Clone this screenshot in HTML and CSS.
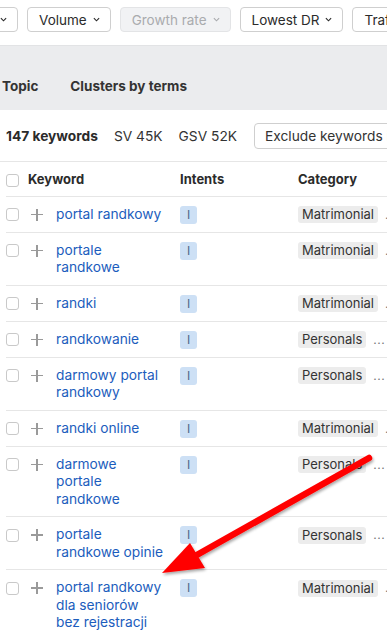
FILE: index.html
```html
<!DOCTYPE html>
<html lang="pl">
<head>
<meta charset="utf-8">
<title>Keywords</title>
<link rel="stylesheet" href="styles.css">
</head>
<body>
<div class="page">
  <div class="toolbar">
    <button class="btn btn-first">KD <svg class="chev" viewBox="0 0 8 5"><path d="M1 1l3 3 3-3"/></svg></button>
    <button class="btn">Volume <svg class="chev" viewBox="0 0 8 5"><path d="M1 1l3 3 3-3"/></svg></button>
    <button class="btn btn-disabled">Growth rate <svg class="chev" viewBox="0 0 8 5"><path d="M1 1l3 3 3-3"/></svg></button>
    <button class="btn">Lowest DR <svg class="chev" viewBox="0 0 8 5"><path d="M1 1l3 3 3-3"/></svg></button>
    <button class="btn">Traffic potential <svg class="chev" viewBox="0 0 8 5"><path d="M1 1l3 3 3-3"/></svg></button>
  </div>

  <div class="tabs">
    <div class="tab">Topic</div>
    <div class="tab">Clusters by terms</div>
  </div>

  <div class="stats">
    <span class="count">147 keywords</span>
    <span class="stat sv">SV 45K</span>
    <span class="stat gsv">GSV 52K</span>
    <div class="exclude">Exclude keywords in clusters</div>
  </div>

  <div class="table">
    <div class="row head">
      <span class="cb"></span>
      <span class="h-kw">Keyword</span>
      <span class="h-int">Intents</span>
      <span class="h-cat">Category</span>
    </div>

    <div class="row">
      <span class="cb"></span><span class="plus"></span>
      <a class="kw">portal randkowy</a>
      <span class="intent"><span class="ib">I</span></span>
      <span class="cat"><span class="cb-tag">Matrimonial</span><span class="more">...</span></span>
    </div>
    <div class="row">
      <span class="cb"></span><span class="plus"></span>
      <a class="kw">portale randkowe</a>
      <span class="intent"><span class="ib">I</span></span>
      <span class="cat"><span class="cb-tag">Matrimonial</span><span class="more">...</span></span>
    </div>
    <div class="row">
      <span class="cb"></span><span class="plus"></span>
      <a class="kw">randki</a>
      <span class="intent"><span class="ib">I</span></span>
      <span class="cat"><span class="cb-tag">Matrimonial</span><span class="more">...</span></span>
    </div>
    <div class="row">
      <span class="cb"></span><span class="plus"></span>
      <a class="kw">randkowanie</a>
      <span class="intent"><span class="ib">I</span></span>
      <span class="cat"><span class="cb-tag">Personals</span><span class="more">...</span></span>
    </div>
    <div class="row">
      <span class="cb"></span><span class="plus"></span>
      <a class="kw">darmowy portal randkowy</a>
      <span class="intent"><span class="ib">I</span></span>
      <span class="cat"><span class="cb-tag">Personals</span><span class="more">...</span></span>
    </div>
    <div class="row">
      <span class="cb"></span><span class="plus"></span>
      <a class="kw">randki online</a>
      <span class="intent"><span class="ib">I</span></span>
      <span class="cat"><span class="cb-tag">Matrimonial</span><span class="more">...</span></span>
    </div>
    <div class="row">
      <span class="cb"></span><span class="plus"></span>
      <a class="kw">darmowe portale randkowe</a>
      <span class="intent"><span class="ib">I</span></span>
      <span class="cat"><span class="cb-tag">Personals</span><span class="more">...</span></span>
    </div>
    <div class="row">
      <span class="cb"></span><span class="plus"></span>
      <a class="kw">portale randkowe opinie</a>
      <span class="intent"><span class="ib">I</span></span>
      <span class="cat"><span class="cb-tag">Personals</span><span class="more">...</span></span>
    </div>
    <div class="row">
      <span class="cb"></span><span class="plus"></span>
      <a class="kw">portal randkowy dla seniorów bez rejestracji</a>
      <span class="intent"><span class="ib">I</span></span>
      <span class="cat"><span class="cb-tag">Matrimonial</span><span class="more">...</span></span>
    </div>
  </div>

  <svg class="arrow" width="387" height="639" viewBox="0 0 387 639">
    <defs>
      <filter id="sh" x="-20%" y="-20%" width="140%" height="140%">
        <feGaussianBlur in="SourceAlpha" stdDeviation="1.5"/>
        <feOffset dx="1" dy="1.5"/>
        <feComponentTransfer><feFuncA type="linear" slope="0.35"/></feComponentTransfer>
        <feMerge><feMergeNode/><feMergeNode in="SourceGraphic"/></feMerge>
      </filter>
    </defs>
    <g filter="url(#sh)">
      <line x1="369" y1="458" x2="195" y2="556" stroke="#ff0000" stroke-width="6.5" stroke-linecap="round"/>
      <polygon points="162,573 190,543 205,568" fill="#ff0000"/>
    </g>
  </svg>
</div>
</body>
</html>
```

FILE: styles.css
```css
* { box-sizing: border-box; }

html, body {
  margin: 0;
  padding: 0;
  background: #ffffff;
}

body {
  font-family: Inter, "Noto Sans", "Liberation Sans", sans-serif;
  color: #2b2b2b;
  width: 387px;
  height: 639px;
  overflow: hidden;
}

.page {
  position: relative;
  width: 387px;
  height: 639px;
  overflow: hidden;
}

/* toolbar */
.toolbar {
  display: flex;
  gap: 9px;
  height: 45px;
  padding-top: 7px;
  margin-left: -42px;
  white-space: nowrap;
}

.btn {
  display: flex;
  align-items: center;
  gap: 6px;
  flex: none;
  height: 25px;
  padding: 0 10px 0 11px;
  border: 1px solid #cfcfcf;
  border-radius: 4px;
  background: #fff;
  font-family: inherit;
  font-size: 13.5px;
  color: #2b2b2b;
}

.btn-first {
  width: 60px;
  justify-content: flex-end;
  padding-right: 10px;
}

.btn-disabled {
  background: #f1f2f4;
  border-color: #e3e4e6;
  color: #a9abae;
}

.chev {
  width: 7px;
  height: 5px;
  fill: none;
  stroke: currentColor;
  stroke-width: 1.3;
}

/* tabs */
.tabs {
  height: 65px;
  background: #ebecee;
  border-top: 1px solid #e2e3e5;
  display: flex;
  align-items: flex-end;
  gap: 32px;
  padding: 0 0 0 2px;
}

.tab {
  height: 48px;
  font-size: 13.5px;
  font-weight: 700;
  color: #333;
  line-height: 48px;
}

/* stats */
.stats {
  height: 51px;
  display: flex;
  align-items: center;
  padding-left: 6px;
  font-size: 13.75px;
  white-space: nowrap;
}

.count {
  font-weight: 700;
  margin-right: 16px;
}

.stat {
  color: #333;
}

.sv {
  margin-right: 16px;
}

.gsv {
  margin-right: 17px;
}

.exclude {
  flex: none;
  height: 26px;
  line-height: 24px;
  padding: 0 10px;
  border: 1px solid #cfcfcf;
  border-radius: 4px;
  font-size: 13.75px;
  color: #333;
}

/* table */
.table {
  border-top: 1px solid #e6e6e6;
}

.row {
  display: grid;
  grid-template-columns: 25px 25px 124px 118px auto;
  align-items: start;
  margin-left: 6px;
  padding: 9px 0 8px;
  border-bottom: 1px solid #e6e6e6;
  font-size: 13.75px;
  line-height: 17.5px;
  white-space: nowrap;
}

.row.head {
  grid-template-columns: 22px 152px 118px auto;
  padding-bottom: 7px;
  font-weight: 700;
  font-size: 13px;
  color: #2b2b2b;
}

.cb {
  display: block;
  width: 13px;
  height: 13px;
  margin-top: 2.5px;
  border: 1px solid #c9c9c9;
  border-radius: 3px;
  background: #fff;
}

.plus {
  position: relative;
  display: block;
  width: 12px;
  height: 12px;
  margin-top: 3px;
}

.plus::before,
.plus::after {
  content: "";
  position: absolute;
  background: #9a9a9a;
}

.plus::before {
  left: 0;
  top: 5.25px;
  width: 12px;
  height: 1.5px;
}

.plus::after {
  left: 5.25px;
  top: 0;
  width: 1.5px;
  height: 12px;
}

.kw {
  color: #1c5dbd;
  white-space: normal;
  padding-right: 15.5px;
  text-decoration: none;
}

.intent {
  display: block;
  height: 18px;
}

.ib {
  display: block;
  width: 17px;
  height: 18px;
  border-radius: 3px;
  background: #cde0f5;
  color: #4a6488;
  font-size: 12px;
  line-height: 18px;
  text-align: center;
}

.cat {
  display: flex;
  align-items: center;
  gap: 7px;
  height: 18px;
}

.cb-tag {
  display: block;
  height: 17px;
  padding: 0 4px;
  border-radius: 3px;
  background: #ececec;
  color: #333;
  font-size: 13px;
  line-height: 17px;
}

.more {
  color: #777;
  font-size: 12px;
  letter-spacing: 0.5px;
}

/* annotation overlay */
.arrow {
  position: absolute;
  left: 0;
  top: 0;
  pointer-events: none;
}
```
